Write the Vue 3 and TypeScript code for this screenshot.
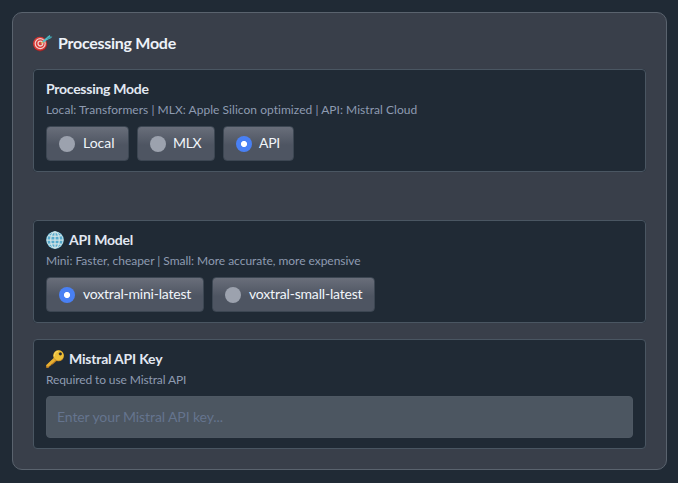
<script setup lang="ts">
import { ref } from 'vue'

const modes = ['Local', 'MLX', 'API']
const models = ['voxtral-mini-latest', 'voxtral-small-latest']
const mode = ref('API')
const model = ref('voxtral-mini-latest')
const apiKey = ref('')
</script>

<template>
  <main class="page">
    <section class="card">
      <h2 class="title">
        <svg class="target" viewBox="0 0 20 18">
          <ellipse cx="7.2" cy="10.2" rx="7" ry="7.2" fill="#8f2427" />
          <circle cx="6.9" cy="9.6" r="6.8" fill="#d83a36" />
          <circle cx="7.2" cy="9.6" r="5" fill="none" stroke="#efcfcd" stroke-width="1.2" />
          <circle cx="7.4" cy="9.6" r="2.4" fill="none" stroke="#efcfcd" stroke-width="1.3" />
          <path d="M8 9.5 11 7" stroke="#d4b45c" stroke-width="1.5" />
          <path d="m9.9 7.9 5-4" stroke="#55bdc6" stroke-width="2" />
          <path d="m13.5 4.7 1-2.3L17.2.8l-.3 1.7 2.5.2-2 1.7-3.6 1.5Z" fill="#4fb9c3" />
          <path d="m14.3 4.9 4-2.2" stroke="#247b8c" stroke-width=".6" />
        </svg>
        <span class="title-text">Processing Mode</span>
      </h2>

      <fieldset class="group modes">
        <h3 class="label"><span class="mode-label">Processing Mode</span></h3>
        <p class="hint hint-mode">Local: Transformers | MLX: Apple Silicon optimized | API: Mistral Cloud</p>
        <div class="options">
          <label v-for="item in modes" :key="item" class="option" :class="`option-${item.toLowerCase()}`">
            <input v-model="mode" type="radio" name="mode" :value="item" />
            <span>{{ item }}</span>
          </label>
        </div>
      </fieldset>

      <fieldset class="group models">
        <h3 class="label">
          <svg class="emoji" viewBox="0 0 18 18">
            <circle cx="9" cy="9" r="8.8" fill="#62b3d3" />
            <circle cx="9" cy="9" r="8" fill="#55aacd" />
            <g fill="none" stroke="#d0e3e6" stroke-width="1.25">
              <circle cx="9" cy="9" r="8" stroke-width=".8" />
              <ellipse cx="9" cy="9" rx="4.3" ry="8.2" />
              <path d="M9 .8v16.4M.8 9h16.4M2.5 4.6q6.5 1.6 13 0M2.5 13.4q6.5-1.6 13 0" />
            </g>
          </svg>
          <span class="model-label">API Model</span>
        </h3>
        <p class="hint hint-model">Mini: Faster, cheaper | Small: More accurate, more expensive</p>
        <div class="options">
          <label v-for="item in models" :key="item" class="option" :class="item">
            <input v-model="model" type="radio" name="model" :value="item" />
            <span>{{ item }}</span>
          </label>
        </div>
      </fieldset>

      <div class="group key-group">
        <h3 class="label">
          <svg class="emoji" viewBox="0 0 18 18">
            <path d="m9 7.5 2.6 2.6-4.9 4.5-1.2-.1-.4 1.3-1.4.1-.3 1.2L2.2 18H.2v-2.8Z" fill="#b97922" />
            <path d="m8.7 7 2.2 2.2-8.2 7.2H.4v-1.5Z" fill="#e6af31" />
            <ellipse cx="12.6" cy="5.9" rx="5.3" ry="5.4" fill="#c78d25" />
            <ellipse cx="12.5" cy="5.4" rx="5.1" ry="5.1" fill="#edc038" />
            <path d="M8.3 6.3q-.2-4 3.8-5" fill="none" stroke="#f9de75" stroke-width=".8" />
            <circle cx="14.3" cy="3.8" r="1.65" fill="#5d4b26" />
            <circle cx="14.4" cy="4" r="1.15" fill="#202a35" />
          </svg>
          <span class="key-label">Mistral API Key</span>
        </h3>
        <p class="hint hint-key">Required to use Mistral API</p>
        <input v-model="apiKey" class="key-input" type="text" aria-label="Mistral API Key" placeholder="Enter your Mistral API key..." />
      </div>
    </section>
  </main>
</template>

<style>
body { background: #202a35; }
</style>

<style scoped>
* { box-sizing: border-box; }
.page { height: 483px; padding: 12px 11px 13px 12px; background: #202a35; font-family: Lato, "Open Sans", sans-serif; color: #edf2f9; }
.card { height: 458px; padding: 20px; border: 1px solid #5a636e; border-radius: 10px; background: #393f4a; }
.title { display: flex; align-items: center; gap: 5px; height: 20px; margin: 0 0 16px; font-size: 16px; line-height: 20px; font-weight: 700; }
.title-text { padding-bottom: 1px; letter-spacing: -.27px; }
.target { width: 20px; height: 18px; }
.group { min-width: 0; margin: 0; padding: 11px 12px; border: 1px solid #4a5662; border-radius: 4px; background: #202a35; }
.modes, .models { height: 103px; }
.modes { margin-bottom: 48px; }
.models { margin-bottom: 16px; }
.key-group { height: 110px; }
.label { display: flex; align-items: center; gap: 5px; height: 18px; margin: 0; font-size: 14px; line-height: 18px; font-weight: 700; color: #e2e8f2; }
.label span { padding-bottom: 2px; }
.mode-label { letter-spacing: -.27px; }
.model-label, .key-label { letter-spacing: -.2px; }
.emoji { width: 18px; height: 18px; position: relative; top: -1px; }
.hint { margin: 2px 0 8px; height: 17px; font-size: 12px; line-height: 18px; color: #8e9bb1; white-space: nowrap; }
.hint-mode { letter-spacing: .04px; }
.hint-model { letter-spacing: -.03px; }
.hint-key { letter-spacing: -.11px; }
.options { display: flex; gap: 8px; }
.option { display: flex; align-items: center; height: 35px; padding: 0 12px; gap: 8px; border: 1px solid #3c4652; border-radius: 4px; background: linear-gradient(#696e7a, #4e5562 55%, #4e5562); font-size: 14px; line-height: 20px; white-space: nowrap; color: #f1f5fa; }
.option span { padding-bottom: 2px; }
.option-local { width: 83px; }
.option-mlx { width: 78px; gap: 7px; letter-spacing: -.35px; }
.option-api { width: 71px; gap: 7px; letter-spacing: -.3px; }
.voxtral-mini-latest { width: 158px; letter-spacing: -.2px; }
.voxtral-small-latest { width: 163px; letter-spacing: -.18px; }
.option input { appearance: none; flex: none; width: 16px; height: 16px; margin: 0; border-radius: 50%; background: #9ca2ae; }
.option input:checked { background: radial-gradient(circle, #fff 0 2.7px, #4980f4 3.4px); }
.key-input { display: block; width: 100%; height: 42px; margin: 0; padding: 0 10px 2px; border: 1px solid #4e5863; border-radius: 4px; outline: none; background: #4c5661; font-family: inherit; font-size: 14px; letter-spacing: -.1px; color: #f1f5fa; }
.key-input::placeholder { color: #65748e; opacity: 1; }
</style>
